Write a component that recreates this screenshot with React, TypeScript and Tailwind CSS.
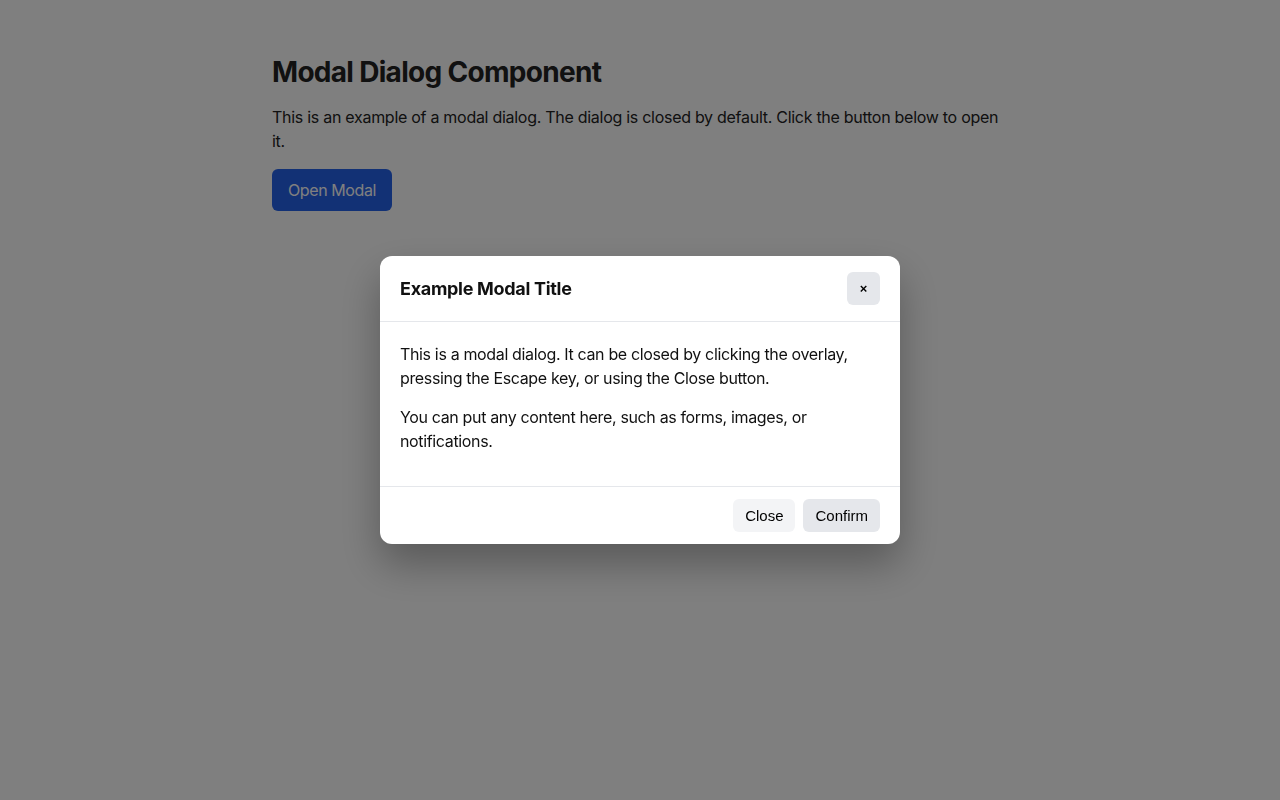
export default function App() {
  return (
    <div className="min-h-screen bg-white text-[#222] font-['Inter',sans-serif]">
      <main className="max-w-[736px] mx-auto pt-[55px]">
        <h1 className="text-[28px] leading-[34px] font-bold tracking-[-0.7px]">Modal Dialog Component</h1>
        <p className="mt-4 text-base leading-6 tracking-[-0.28px]">
          This is an example of a modal dialog. The dialog is closed by default. Click the button below to open it.
        </p>
        <button className="mt-4 h-[42px] px-4 rounded-md bg-[#2563eb] text-white text-base tracking-[-0.4px]">Open Modal</button>
      </main>

      {/* Overlay */}
      <div className="fixed inset-0 bg-black/50 flex items-center justify-center">
        <div className="w-[520px] bg-white rounded-xl shadow-[0_20px_40px_rgba(0,0,0,0.3)] text-[#111]">
          <div className="flex items-center justify-between px-5 py-4 border-b border-[#e5e7eb]">
            <h2 className="text-lg font-bold leading-6 tracking-[-0.3px]">Example Modal Title</h2>
            <button className="w-[33px] h-[33px] rounded-md bg-[#e5e7eb] flex items-center justify-center text-[13px] font-bold font-['Liberation_Sans',sans-serif] text-black">
              ×
            </button>
          </div>
          <div className="px-5 pt-5 pb-[13px] text-base leading-6 tracking-[-0.35px]">
            <p className="mb-[15px]">
              This is a modal dialog. It can be closed by clicking the overlay, pressing the Escape key, or using the Close button.
            </p>
            <p className="mb-5">You can put any content here, such as forms, images, or notifications.</p>
          </div>
          <div className="flex justify-end gap-2 px-5 py-3 border-t border-[#e5e7eb] font-['Liberation_Sans',sans-serif] text-[15px] text-black">
            <button className="h-[33px] px-3 pt-px rounded-md bg-[#f3f4f6]">Close</button>
            <button className="h-[33px] px-3 pt-px rounded-md bg-[#e5e7eb]">Confirm</button>
          </div>
        </div>
      </div>
    </div>
  )
}
